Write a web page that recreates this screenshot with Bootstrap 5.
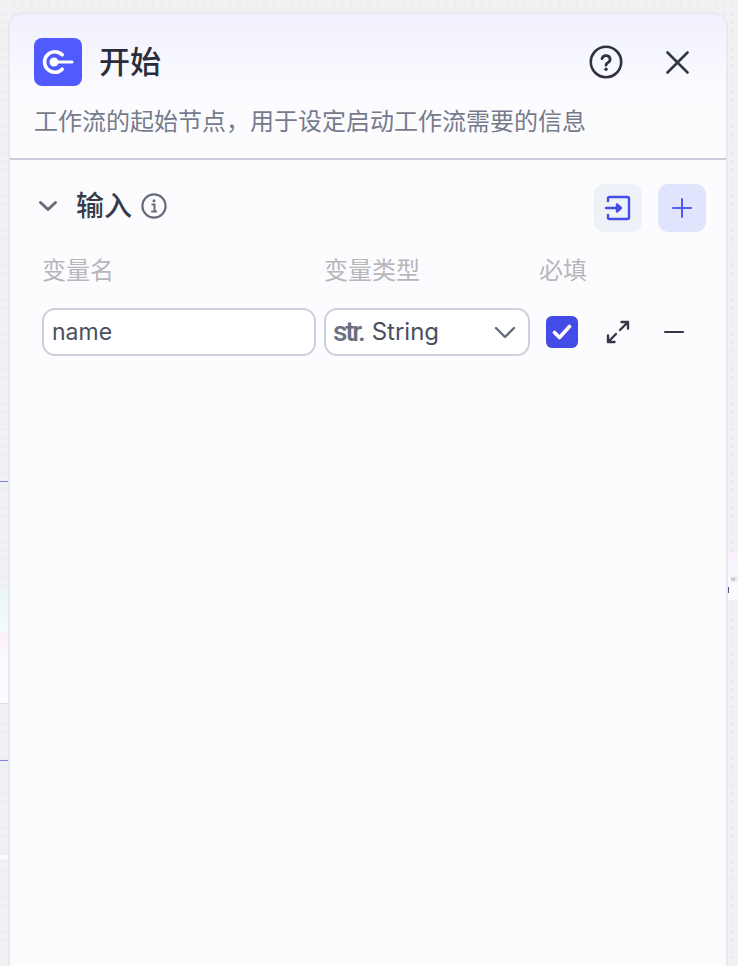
<!DOCTYPE html>
<html lang="zh-CN">
<head>
    <meta charset="UTF-8">
    <title>开始</title>
    <link href="https://cdn.jsdelivr.net/npm/bootstrap@5.3.3/dist/css/bootstrap.min.css" rel="stylesheet">
    <style>
        html, body {
            height: 100%;
            overflow: hidden;
        }

        body {
            background-color: #f0f1f3;
            background-image: radial-gradient(circle, #e4e5e8 1px, transparent 1.2px);
            background-size: 8.67px 8.67px;
            background-position: 1px 1px;
            font-family: Inter, "Noto Sans CJK SC", sans-serif;
            color: #2f3240;
        }

        .stage {
            position: relative;
            height: 966px;
            padding: 12px 10px 0 8px;
        }

        .canvas-bit {
            position: absolute;
            background: #fcfcff;
        }

        .bit-left {
            left: 0;
            top: 590px;
            width: 9px;
            height: 114px;
            border-bottom: 1px solid #dcdde2;
            background: linear-gradient(#e8f6f6 0, #f5fbfb 42px, #fdeff8 43px, #fcfcff 70px);
        }

        .bit-left-low {
            left: 0;
            top: 855px;
            width: 9px;
            height: 4px;
        }

        .bit-right {
            left: 727px;
            top: 552px;
            width: 11px;
            height: 48px;
            background: linear-gradient(#f8f0fc, #fcfcff);
        }

        .bit-right-tag {
            position: absolute;
            left: 731px;
            top: 576px;
            width: 7px;
            height: 6px;
            background: #eceef4;
            color: #8a8e9c;
            font-size: 5px;
            line-height: 6px;
            overflow: hidden;
        }

        .bit-right-mark {
            position: absolute;
            left: 728px;
            top: 587px;
            width: 1px;
            height: 6px;
            background: #4f5580;
        }

        .edge-line {
            position: absolute;
            left: 0;
            width: 8px;
            height: 1px;
            background: #7d82e8;
        }

        .edge-top {
            top: 481px;
        }

        .edge-low {
            top: 760px;
        }

        .panel {
            position: relative;
            height: 100%;
            background: #fcfcff;
            border: 2px solid #e8e9f0;
            border-bottom: 0;
            border-radius: 16px 16px 0 0;
            overflow: hidden;
        }

        .panel-head {
            height: 146px;
            padding: 24px 24px 0 24px;
            background: linear-gradient(#f1f1fe, #fcfcff 90px);
            border-bottom: 2px solid #cbcee0;
        }

        .node-icon {
            width: 48px;
            height: 48px;
            border-radius: 8px;
            background: #4f5bff;
            flex: none;
        }

        .panel-title {
            font-size: 31px;
            font-weight: 500;
            line-height: 48px;
            margin: 0 0 0 17px;
            color: #2b2e3a;
        }

        .head-tools {
            gap: 43px;
            margin-right: 13px;
        }

        .panel-desc {
            font-size: 24px;
            line-height: 32px;
            color: #767b8c;
            margin: 20px 0 0 0;
            white-space: nowrap;
        }

        .panel-body {
            padding: 24px 20px 0 24px;
        }

        .section-title {
            font-size: 28px;
            font-weight: 500;
            line-height: 44px;
            color: #383c4a;
            margin: 0 9px 4px 18px;
        }

        .section-icon {
            margin-bottom: 4px;
        }

        .square-btn {
            width: 48px;
            height: 48px;
            border: 0;
            border-radius: 10px;
            padding: 0;
        }

        .btn-gray {
            background: #eff1f9;
        }

        .btn-blue {
            background: #e0e4fd;
        }

        .col-labels {
            margin: 21px 0 0 8px;
            font-size: 24px;
            line-height: 36px;
            color: #b6b7bb;
        }

        .label-name {
            width: 282px;
        }

        .label-type {
            width: 215px;
        }

        .var-row {
            margin: 19px 0 0 8px;
        }

        .var-field {
            height: 48px;
            border: 2px solid #cdd0e0;
            border-radius: 13px;
            background: #fff;
            font-size: 24px;
            color: #4a4f5e;
            padding: 0 8px;
        }

        .var-name {
            width: 274px;
            margin-right: 8px;
            font-size: 23px;
        }

        .var-type {
            width: 206px;
            padding: 0 12px 0 7px;
        }

        .type-tag {
            font-family: Roboto, sans-serif;
            font-size: 28px;
            font-weight: 500;
            letter-spacing: -2.2px;
            color: #6a7080;
            margin-right: 8px;
        }

        .check-box {
            width: 32px;
            height: 32px;
            border-radius: 6px;
            background: #444ce7;
            margin-left: 16px;
            flex: none;
        }

        .tool-expand {
            flex: none;
            margin-left: 28px;
        }

        .tool-minus {
            flex: none;
            margin-left: 34px;
        }
    </style>
</head>
<body>

<div class="stage">
    <div class="canvas-bit bit-left"></div>
    <div class="canvas-bit bit-left-low"></div>
    <div class="canvas-bit bit-right"></div>
    <div class="bit-right-tag">in</div>
    <div class="bit-right-mark"></div>
    <div class="edge-line edge-top"></div>
    <div class="edge-line edge-low"></div>

    <div class="panel">
        <div class="panel-head">
            <div class="d-flex align-items-center">
                <div class="node-icon">
                    <svg width="48" height="48" viewBox="0 0 48 48" fill="none" stroke="#fff" stroke-linecap="round">
                        <path d="M28.200 16.800A10.300 10.300 0 1 0 28.200 31.200" stroke-width="3.600"/>
                        <circle cx="20" cy="24" r="4.500" fill="#fff" stroke="none"/>
                        <path d="M20 24H38" stroke-width="3"/>
                    </svg>
                </div>
                <h1 class="panel-title">开始</h1>
                <div class="head-tools d-flex align-items-center ms-auto">
                    <svg width="34" height="34" viewBox="0 0 34 34" fill="none" stroke="#2f3240" stroke-width="2.600" stroke-linecap="round">
                        <circle cx="17" cy="17" r="15.200"/>
                        <path d="M13 13.600a4.200 4.200 0 0 1 8.200 1c0 2.800-4.200 3.200-4.200 5.600" stroke-width="2.800"/>
                        <circle cx="17" cy="24.200" r="1.700" fill="#2f3240" stroke="none"/>
                    </svg>
                    <svg width="23" height="23" viewBox="0 0 23 23" fill="none" stroke="#333644" stroke-width="2.600" stroke-linecap="round">
                        <path d="M1.500 1.500L21.500 21.500M21.500 1.500L1.500 21.500"/>
                    </svg>
                </div>
            </div>
            <p class="panel-desc">工作流的起始节点，用于设定启动工作流需要的信息</p>
        </div>

        <div class="panel-body">
            <div class="d-flex align-items-center">
                <svg width="20" height="12" viewBox="0 0 20 12" fill="none" stroke="#676c7c" stroke-width="3" stroke-linecap="round" stroke-linejoin="round" class="section-icon ms-1">
                    <path d="M2.500 2.500L10 9.500L17.500 2.500"/>
                </svg>
                <span class="section-title">输入</span>
                <svg width="26" height="26" viewBox="0 0 26 26" fill="none" stroke="#676c7c" class="section-icon">
                    <circle cx="13" cy="13" r="11.600" stroke-width="2.200"/>
                    <circle cx="13" cy="7.800" r="1.500" fill="#676c7c" stroke="none"/>
                    <path d="M10.500 11.500H13.500V18M10.200 18.500H16" stroke-width="2"/>
                </svg>
                <div class="d-flex gap-3 ms-auto">
                    <button type="button" class="square-btn btn-gray d-flex align-items-center justify-content-center">
                        <svg width="26" height="26" viewBox="0 0 26 26" fill="none" stroke="#444ce7" stroke-width="2.400" stroke-linecap="round" stroke-linejoin="round">
                            <path d="M3 6V3.500A1.500 1.500 0 0 1 4.500 2H22.500A1.500 1.500 0 0 1 24 3.500V22.500A1.500 1.500 0 0 1 22.500 24H4.500A1.500 1.500 0 0 1 3 22.500V20"/>
                            <path d="M1 13H15"/>
                            <path d="M12 9.500L16 13L12 16.500Z" fill="#444ce7"/>
                        </svg>
                    </button>
                    <button type="button" class="square-btn btn-blue d-flex align-items-center justify-content-center">
                        <svg width="20" height="20" viewBox="0 0 20 20" fill="none" stroke="#4f5bff" stroke-width="2" stroke-linecap="round">
                            <path d="M10 1V19M1 10H19"/>
                        </svg>
                    </button>
                </div>
            </div>

            <div class="col-labels d-flex">
                <div class="label-name">变量名</div>
                <div class="label-type">变量类型</div>
                <div>必填</div>
            </div>

            <div class="var-row d-flex align-items-center">
                <div class="var-field var-name d-flex align-items-center">name</div>
                <div class="var-field var-type d-flex align-items-center">
                    <span class="type-tag">str.</span>
                    <span>String</span>
                    <svg width="22" height="13" viewBox="0 0 22 13" fill="none" stroke="#676c7c" stroke-width="2.400" stroke-linecap="round" stroke-linejoin="round" class="ms-auto">
                        <path d="M2 2L11 11L20 2"/>
                    </svg>
                </div>
                <div class="check-box d-flex align-items-center justify-content-center">
                    <svg width="20" height="16" viewBox="0 0 20 16" fill="none" stroke="#fff" stroke-width="3.600" stroke-linecap="round" stroke-linejoin="round">
                        <path d="M2.500 8.500L7.500 13.500L17.500 2.500"/>
                    </svg>
                </div>
                <svg width="24" height="24" viewBox="0 0 24 24" fill="none" stroke="#343846" stroke-width="2.400" stroke-linecap="round" stroke-linejoin="round" class="tool-expand">
                    <path d="M14 10L22 2M15.500 2H22V8.500M10 14L2 22M2 15.500V22H8.500"/>
                </svg>
                <svg width="20" height="4" viewBox="0 0 20 4" fill="none" stroke="#343846" stroke-width="2" stroke-linecap="round" class="tool-minus">
                    <path d="M1 2H19"/>
                </svg>
            </div>
        </div>
    </div>
</div>

<script src="https://cdn.jsdelivr.net/npm/bootstrap@5.3.3/dist/js/bootstrap.bundle.min.js"></script>
</body>
</html>
